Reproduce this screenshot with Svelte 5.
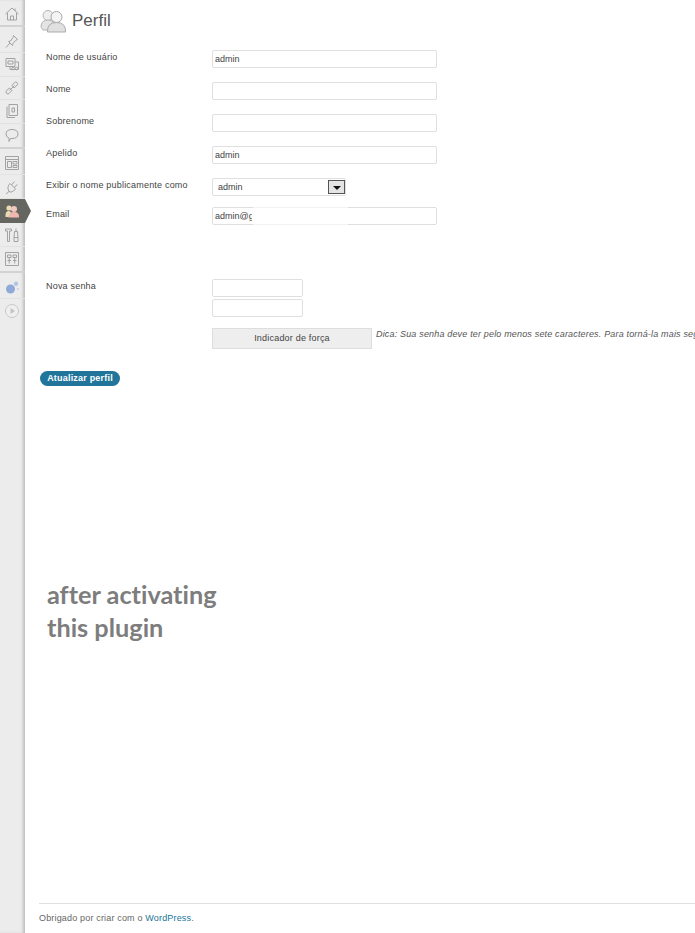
<script>
  const groups = [
    ['home'],
    ['pin', 'media', 'link', 'pages', 'comments'],
    ['appearance', 'plugins', 'users', 'tools', 'settings'],
    ['blob', 'play']
  ];
</script>

{#snippet icon(name)}
  <svg class="ico" viewBox="0 0 16 16" width="16" height="16" fill="none" stroke="#a2a2a2" stroke-width="1">
    {#if name === 'home'}
      <path d="M1.500 8 8 2l6.500 6M3.500 7v7h9V7M6.500 14v-4h3v4M11 2.500v2.500" />
    {:else if name === 'pin'}
      <path d="M9.500 2.500l4 4-2 1-2.500 3-.5 2-4-4 2-.5L9 4.500zM6 10l-4 4.500" />
    {:else if name === 'media'}
      <path d="M2 2.500h9v8H2zM4 5h5v3H4zM11 6h3.500v7.500H6V10.500" /><circle cx="9" cy="12.500" r="1.300" /><circle cx="12.500" cy="12.500" r="1.300" />
    {:else if name === 'link'}
      <path d="M2.500 10.500 5.500 8l2.500 2.500-3 3q-1 1-2.300 0t-.2-3zM8 5.500l2.500-3q1-1 2.500 0t.2 2.500l-3 3zM5.500 10.500l5-5" />
    {:else if name === 'pages'}
      <path d="M3 3.500v11h8M5 1.500h8.500v11H5zM8 5h2.500v4H8z" />
    {:else if name === 'comments'}
      <path d="M2 7q0-4.500 6-4.500T14 7t-6 4.500H6.500L5 14.500v-3.300Q2 10 2 7z" />
    {:else if name === 'appearance'}
      <path d="M1.500 1.500h13v13h-13zM1.500 4.500h13M3.500 6.500h4v6h-4zM9 6.500h4v2.500H9zM9 10.500h4v2H9z" />
    {:else if name === 'plugins'}
      <path d="M6 4.500 11.500 10l-2 2q-2.500 2-4.500.5l-3 2.500M6 4.500 4.500 6.500Q3 9 5 12.500M7.500 6l3-3.500M10 8.500l3.500-3" />
    {:else if name === 'tools'}
      <path d="M1.500 2h6v2H5.500v10.500h-2V4h-2zM12 1.500v3h1.500l.5 6h-4l.5-6H12M10 10.500h4v4h-4z" />
    {:else if name === 'settings'}
      <path d="M1.500 1.500h13v13h-13zM3.500 4h3.500v2.500H3.500zM9 4h3.500v2.500H9zM5.200 6.500v6M3.500 9.500h3.500M10.700 6.500v6M9 9.500h3.500" />
    {:else if name === 'play'}
      <circle cx="8" cy="8" r="6.500" fill="#efefef" stroke="#c8c8c8" /><path d="M6.500 5v6l4.500-3z" fill="#c4c4c4" stroke="none" />
    {:else if name === 'blob'}
      <circle cx="6.500" cy="10" r="4.500" fill="#8fa9d8" stroke="none" /><circle cx="12" cy="4.800" r="2.200" fill="#b4c4e2" stroke="none" /><circle cx="13.800" cy="10" r="1" fill="#c4d0e8" stroke="none" />
    {:else if name === 'users'}
      <circle cx="5" cy="5" r="2.600" fill="#e8dcb0" stroke="none" /><circle cx="10" cy="6" r="3" fill="#f0c8c0" stroke="none" /><path d="M1.500 12q0-4 3.500-4l2 1-1 5H1.500z" fill="#e8dcb0" stroke="none" /><path d="M4.500 14.500q0-5.500 5.500-5.500t5 5.500z" fill="#f0b8b0" stroke="none" />
    {/if}
  </svg>
{/snippet}

<div class="page">
  <nav class="rail">
    {#each groups as group}
      <div class="group">
        {#each group as name}
          <div class="item" class:active={name === 'users'}>{@render icon(name)}</div>
        {/each}
      </div>
    {/each}
  </nav>

  <main class="main">
    <header class="head">
      <svg class="head-icon" viewBox="0 0 26 26" width="26" height="26">
        <circle cx="8" cy="8.500" r="5" fill="#eee" stroke="#b4b4b4" />
        <path d="M1 20q0-7 7-7t6 7l-5 3H3z" fill="#e4e4e4" stroke="#b4b4b4" />
        <circle cx="16.500" cy="10" r="5.500" fill="#f4f4f4" stroke="#aaa" />
        <path d="M7.500 25q-.5-9.500 9-9.500t9 9.500z" fill="#e0e0e0" stroke="#aaa" />
      </svg>
      <h1>Perfil</h1>
    </header>

    <form class="form">
      <div class="row r1"><span class="lab">Nome de usuário</span><div class="field wide">admin</div></div>
      <div class="row r2"><span class="lab">Nome</span><div class="field wide"></div></div>
      <div class="row r2"><span class="lab">Sobrenome</span><div class="field wide"></div></div>
      <div class="row r2"><span class="lab">Apelido</span><div class="field wide">admin</div></div>
      <div class="row r2"><span class="lab">Exibir o nome publicamente como</span>
        <div class="field select"><span>admin</span><span class="arrow"></span></div>
      </div>
      <div class="row r3"><span class="lab">Email</span><div class="field wide email"><span class="cut">admin@g</span></div></div>
      <div class="row r4"><span class="lab">Nova senha</span>
        <div class="pw">
          <div class="field short"></div>
          <div class="field short"></div>
          <div class="meter">
            <div class="strength">Indicador de força</div>
            <p class="hint">Dica: Sua senha deve ter pelo menos sete caracteres. Para torná-la mais segura, use letras maiúsculas e minúsculas</p>
          </div>
        </div>
      </div>
      <button type="button" class="submit">Atualizar perfil</button>
    </form>

    <p class="note">after activating<br />this plugin</p>

    <footer class="foot">Obrigado por criar com o <a href="#top">WordPress</a>.</footer>
  </main>
</div>

<style>
  :global(body) {
    margin: 0;
    background: #fff;
    overflow: hidden;
  }
  .page {
    display: flex;
    width: 695px;
    height: 933px;
    overflow: hidden;
    font-family: "Liberation Sans", Arial, sans-serif;
    color: #333;
  }
  .rail {
    flex: 0 0 25px;
    box-sizing: border-box;
    background: #ececec;
    box-shadow: inset -3px 0 3px -1px #bdbdbd;
    padding-top: 2px;
    position: relative;
  }
  .group {
    border-bottom: 2px solid #d2d2d2;
    margin-bottom: 2px;
  }
  .group:first-child {
    margin-bottom: 2.5px;
  }
  .group:last-child {
    border-bottom: 0;
  }
  .item {
    position: relative;
    height: 24px;
    display: flex;
    align-items: center;
    justify-content: center;
    border-bottom: 1px solid #e2e2e2;
    box-sizing: border-box;
    padding-right: 2px;
  }
  .group:first-child .item {
    height: 23px;
  }
  .group:nth-child(2) .item {
    height: 23.5px;
  }
  .item:last-child {
    border-bottom: 0;
  }
  .item.active {
    background: #666660;
    border: 0;
  }
  .item.active::after {
    content: "";
    position: absolute;
    left: 25px;
    top: 0;
    border-left: 6px solid #666660;
    border-top: 12px solid transparent;
    border-bottom: 12px solid transparent;
  }
  .ico {
    display: block;
  }
  .main {
    flex: 1;
    min-width: 0;
    display: flex;
    flex-direction: column;
    padding-left: 14px;
  }
  .head {
    display: flex;
    align-items: center;
    gap: 6px;
    height: 38px;
    padding-left: 1px;
    margin-top: 3px;
  }
  .head-icon {
    flex: none;
    margin-top: -5px;
  }
  h1 {
    margin: -2px 0 0;
    font-size: 17px;
    font-weight: 400;
    color: #555;
  }
  .form {
    padding-left: 7px;
    margin-top: 9px;
    font-size: 9px;
    letter-spacing: 0.2px;
  }
  .row {
    display: flex;
    align-items: flex-start;
  }
  .r2 { margin-top: 14px; }
  .r3 { margin-top: 11px; }
  .r4 { margin-top: 54px; }
  .lab {
    flex: 0 0 166px;
    padding-top: 1px;
    line-height: 12px;
    color: #444;
    white-space: nowrap;
  }
  .field {
    box-sizing: border-box;
    height: 18px;
    border: 1px solid #dfdfdf;
    border-radius: 2px;
    background: #fff;
    font-size: 9px;
    line-height: 16px;
    padding-left: 2px;
    color: #444;
    letter-spacing: 0;
  }
  .wide { width: 225px; }
  .short { width: 91px; }
  .short + .short { margin-top: 2px; }
  .select {
    width: 134px;
    display: flex;
    justify-content: space-between;
    padding-left: 5px;
    padding-right: 0;
    position: relative;
  }
  .arrow {
    width: 17px;
    height: 14px;
    margin-top: 1px;
    box-sizing: border-box;
    border: 1px solid #555;
    background: #e4e4e4;
    position: relative;
  }
  .arrow::after {
    content: "";
    position: absolute;
    left: 4px;
    top: 5px;
    border-top: 4px solid #111;
    border-left: 4px solid transparent;
    border-right: 4px solid transparent;
  }
  .email {
    position: relative;
  }
  .email::after {
    content: "";
    position: absolute;
    left: 40px;
    width: 95px;
    top: -1px;
    bottom: -1px;
    background: rgba(255, 255, 255, 0.6);
  }
  .cut {
    display: inline-block;
    width: 37px;
    overflow: hidden;
    white-space: nowrap;
    vertical-align: top;
  }
  .pw {
    flex: none;
    width: 520px;
  }
  .meter {
    display: flex;
    margin-top: 11px;
    gap: 4px;
  }
  .strength {
    flex: none;
    box-sizing: border-box;
    width: 160px;
    height: 21px;
    background: #eee;
    border: 1px solid #ddd;
    text-align: center;
    line-height: 19px;
    color: #444;
  }
  .hint {
    margin: 0;
    white-space: nowrap;
    font-style: italic;
    line-height: 12px;
    color: #555;
    letter-spacing: 0.17px;
  }
  .submit {
    display: block;
    margin: 22px 0 0 -6px;
    width: 80px;
    height: 15px;
    padding: 0;
    border: 0;
    border-radius: 8px;
    background: #21759b;
    color: #fff;
    font: 700 9px/15px "Liberation Sans", Arial, sans-serif;
    letter-spacing: 0.2px;
  }
  .note {
    margin: 192px 0 0 8px;
    font-family: Lato, sans-serif;
    font-weight: 700;
    font-size: 25.300px;
    line-height: 33px;
    font-variant-ligatures: none;
    color: #7d7d7d;
  }
  .foot {
    margin-top: auto;
    height: 30px;
    box-sizing: border-box;
    border-top: 1px solid #dfdfdf;
    padding-top: 8px;
    font-size: 9px;
    letter-spacing: 0.17px;
    line-height: 12px;
    color: #666;
  }
  .foot a {
    color: #21759b;
    text-decoration: none;
  }
</style>
